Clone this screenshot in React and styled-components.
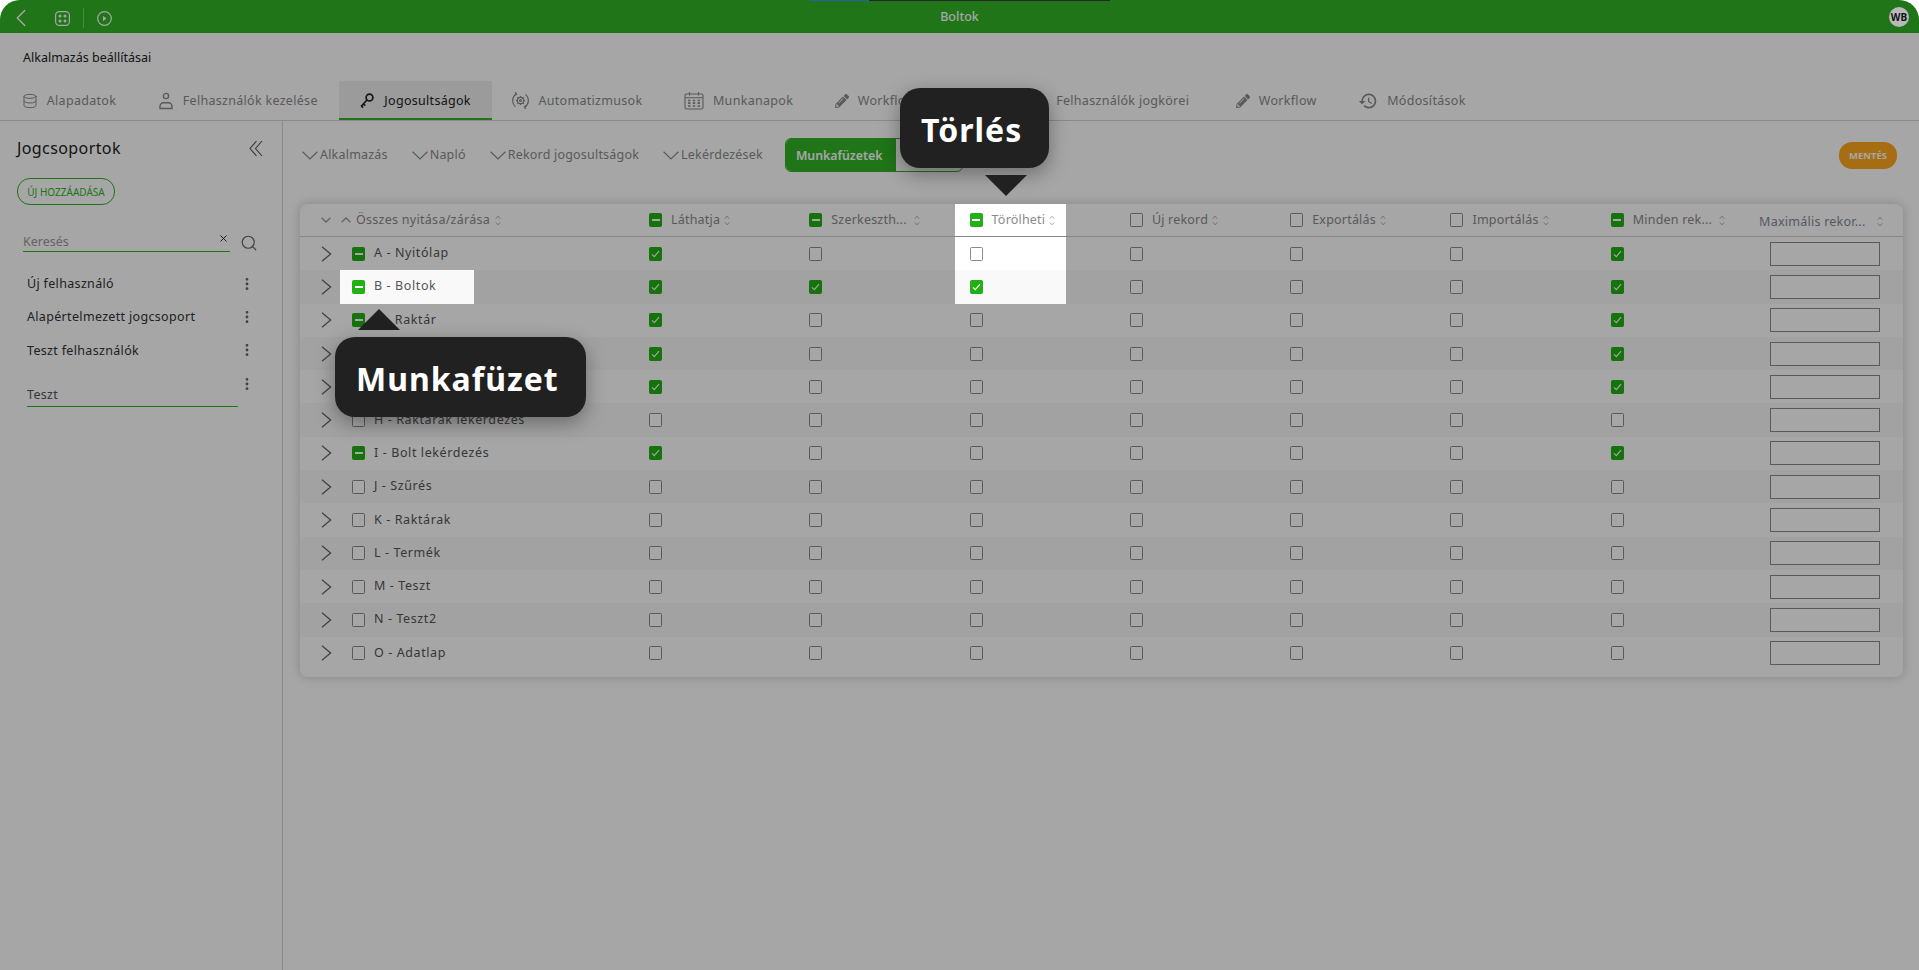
import React from 'react';
import styled, { createGlobalStyle } from 'styled-components';
import { Database, Search, X, ChevronLeft, MoreVertical } from 'lucide-react';
import { MdHistory } from 'react-icons/md';
import { FaPencilAlt } from 'react-icons/fa';

const FONT = '"Noto Sans", "Open Sans", sans-serif';

const GlobalStyle = createGlobalStyle`
    html, body {
        margin: 0;
        height: 100%;
        background: #fff;
        overflow: hidden;
    }
    body {
        font-family: ${FONT};
        font-size: 12.5px;
        color: #444;
    }
`;

const UserIcon = () => (
    <svg width="16" height="18" viewBox="0 0 16 18" fill="none" stroke="currentColor" strokeWidth="1.4">
        <circle cx="8" cy="4" r="2.6" />
        <path d="M2 16.5v-2.2c0-2 1.6-3.6 3.6-3.6h4.8c2 0 3.6 1.6 3.6 3.6v2.2z" />
    </svg>
);

const KeyIcon = () => (
    <svg width="16" height="17" viewBox="0 0 16 17" fill="none" stroke="currentColor" strokeWidth="1.7">
        <circle cx="10.5" cy="5.5" r="3.4" />
        <path d="M8 8 2 14.5M4.6 12l1.6 1.6M2.6 14.2l1.4 1.4" />
    </svg>
);

const AutoIcon = () => (
    <svg width="17" height="19" viewBox="0 0 17 19" fill="none" stroke="currentColor" strokeWidth="1.2">
        <path d="M4.2 2.9A8 8 0 0 0 3.4 15.6" />
        <path d="M12.8 16.1A8 8 0 0 0 13.6 3.4" />
        <path d="M3.2 1l1.4 2.2-2.2 1M13.8 18l-1.4-2.2 2.2-1" />
        <circle cx="8.5" cy="9.5" r="3.2" />
        <circle cx="8.5" cy="9.5" r="1" />
        <path d="M8.5 5v1.4M8.5 12.6V14M4 9.5h1.4M11.6 9.5H13M5.3 6.3l1 1M10.7 11.7l1 1M11.7 6.3l-1 1M6.3 11.7l-1 1" strokeWidth="1.4" />
    </svg>
);

const CalendarIcon = () => (
    <svg width="20" height="19" viewBox="0 0 20 19" fill="none" stroke="currentColor" strokeWidth="1.1">
        <rect x="1" y="3" width="18" height="15" rx="1.5" />
        <path d="M1 6.8h18M5.5 1v3.6M14.5 1v3.6" />
        <path d="M4 9.5h2.4M8.8 9.5h2.4M13.6 9.5H16M4 12.2h2.4M8.8 12.2h2.4M13.6 12.2H16M4 15h2.4M8.8 15h2.4M13.6 15H16" strokeWidth="1.7" />
    </svg>
);

const AppsIcon = () => (
    <svg width="15" height="15" viewBox="0 0 15 15" fill="none" stroke="currentColor" strokeWidth="1.2">
        <rect x="0.6" y="0.6" width="13.8" height="13.8" rx="3.6" />
        <g fill="currentColor" stroke="none">
            <circle cx="5" cy="5" r="1.5" />
            <circle cx="10" cy="5" r="1.5" />
            <circle cx="5" cy="10" r="1.5" />
            <circle cx="10" cy="10" r="1.5" />
        </g>
    </svg>
);

const PlayIcon = () => (
    <svg width="15" height="15" viewBox="0 0 15 15" fill="none" stroke="currentColor" strokeWidth="1.2">
        <circle cx="7.5" cy="7.5" r="6.8" />
        <path d="M6 4.8l3.4 2.7L6 10.2z" fill="currentColor" stroke="none" />
    </svg>
);

const CollapseIcon = () => (
    <svg width="14" height="17" viewBox="0 0 14 17" fill="none" stroke="#555" strokeWidth="1.1">
        <path d="M7.5 1 1 8.5 7.5 16M13 1 6.5 8.5 13 16" />
    </svg>
);

const ExpandIcon = () => (
    <svg width="11" height="16" viewBox="0 0 11 16" fill="none" stroke="#666" strokeWidth="1.3">
        <path d="M1 .8 9.6 8 1 15.2" />
    </svg>
);

const CaretDown = () => (
    <svg width="10" height="6" viewBox="0 0 10 6" fill="none" stroke="#999" strokeWidth="1.3">
        <path d="M.6.8 5 5 9.4.8" />
    </svg>
);

const CaretUp = () => (
    <svg width="10" height="6" viewBox="0 0 10 6" fill="none" stroke="#999" strokeWidth="1.3">
        <path d="M.6 5.2 5 1l4.4 4.2" />
    </svg>
);

const FilterCaret = () => (
    <svg width="16" height="9" viewBox="0 0 16 9" fill="none" stroke="currentColor" strokeWidth="1.2">
        <path d="M.6.8 8 8 15.4.8" />
    </svg>
);

const SortIcon = () => (
    <SortSvg width="6" height="11" viewBox="0 0 6 11" fill="none" stroke="currentColor" strokeWidth="1">
        <path d="M.8 3.6 3 1.2l2.2 2.4M.8 7.4 3 9.8l2.2-2.4" />
    </SortSvg>
);

const Checkbox = ({ state }) => (
    <Box $on={!!state}>
        {state === 'minus' && <Minus />}
        {state === 'check' && (
            <svg width="9" height="8" viewBox="0 0 9 8" fill="none" stroke="#fff" strokeWidth="1.1">
                <path d="M1 4.4 3.3 6.6 8 1.2" />
            </svg>
        )}
    </Box>
);

const tabs = [
    { label: 'Alapadatok', icon: <Database size={16} strokeWidth={1.5} /> },
    { label: 'Felhasználók kezelése', icon: <UserIcon /> },
    { label: 'Jogosultságok', icon: <KeyIcon />, active: true },
    { label: 'Automatizmusok', icon: <AutoIcon /> },
    { label: 'Munkanapok', icon: <CalendarIcon /> },
    { label: 'Workflow', icon: <FaPencilAlt size={14} /> },
    { label: 'Oldal' },
    { label: 'Felhasználók jogkörei', icon: <UserIcon />, tail: 5 },
    { label: 'Workflow', icon: <FaPencilAlt size={14} /> },
    { label: 'Módosítások', icon: <MdHistory size={20} /> },
];

const groups = ['Új felhasználó', 'Alapértelmezett jogcsoport', 'Teszt felhasználók'];

const filters = ['Alkalmazás', 'Napló', 'Rekord jogosultságok', 'Lekérdezések'];

const columns = [
    { label: 'Láthatja', state: 'minus' },
    { label: 'Szerkeszth...', state: 'minus', wide: true },
    { label: 'Törölheti', state: 'minus', spot: true },
    { label: 'Új rekord' },
    { label: 'Exportálás' },
    { label: 'Importálás' },
    { label: 'Minden rek...', state: 'minus', wide: true },
];

const rows = [
    { name: 'A - Nyitólap', on: true },
    { name: 'B - Boltok', on: true, edit: true, del: true, spot: true },
    { name: 'C - Raktár', on: true },
    { name: 'D - Vevők', on: true },
    { name: 'E - Számlák', on: true },
    { name: 'H - Raktárak lekérdezés' },
    { name: 'I - Bolt lekérdezés', on: true },
    { name: 'J - Szűrés' },
    { name: 'K - Raktárak' },
    { name: 'L - Termék' },
    { name: 'M - Teszt' },
    { name: 'N - Teszt2' },
    { name: 'O - Adatlap' },
];

function rowStates(row) {
    return [
        row.on ? 'check' : null,
        row.edit ? 'check' : null,
        row.del ? 'check' : null,
        null,
        null,
        null,
        row.on ? 'check' : null,
    ];
}

function App() {
    return (
        <Screen>
            <GlobalStyle />
            <TopBar>
                <BarLeft>
                    <BackIcon size={30} strokeWidth={1.1} />
                    <AppsIcon />
                    <BarDivider />
                    <PlayIcon />
                </BarLeft>
                <BarTitle>Boltok</BarTitle>
                <Avatar>WB</Avatar>
                <LoadStrip />
            </TopBar>

            <PageTitle>Alkalmazás beállításai</PageTitle>

            <Tabs>
                {tabs.map((tab, i) => (
                    <Tab key={i} $active={tab.active} $tail={tab.tail}>
                        {tab.icon}
                        <span>{tab.label}</span>
                    </Tab>
                ))}
            </Tabs>

            <Body>
                <Sidebar>
                    <SideHeader>
                        <SideTitle>Jogcsoportok</SideTitle>
                        <CollapseIcon />
                    </SideHeader>
                    <AddButton>ÚJ HOZZÁADÁSA</AddButton>
                    <SearchRow>
                        <SearchField>
                            <span>Keresés</span>
                            <X size={11} strokeWidth={2} color="#222" />
                        </SearchField>
                        <SearchIcon size={18} strokeWidth={1.6} color="#666" />
                    </SearchRow>
                    <GroupList>
                        {groups.map((g) => (
                            <GroupItem key={g}>
                                <span>{g}</span>
                                <MoreVertical size={16} strokeWidth={2.2} color="#666" />
                            </GroupItem>
                        ))}
                        <GroupItem>
                            <EditField>Teszt</EditField>
                            <MoreVertical size={16} strokeWidth={2.2} color="#666" />
                        </GroupItem>
                    </GroupList>
                </Sidebar>

                <Main>
                    <Toolbar>
                        {filters.map((f) => (
                            <Filter key={f}>
                                <FilterCaret />
                                {f}
                            </Filter>
                        ))}
                        <Toggle>
                            <ToggleOn>Munkafüzetek</ToggleOn>
                            <ToggleOff>Mezők</ToggleOff>
                        </Toggle>
                        <SaveButton>MENTÉS</SaveButton>
                    </Toolbar>

                    <Card>
                        <HeadRow>
                            <HeadFirst>
                                <CaretDown />
                                <CaretUp />
                                <AllLabel>Összes nyitása/zárása</AllLabel>
                                <SortIcon />
                            </HeadFirst>
                            {columns.map((c) => (
                                <Cell key={c.label}>
                                    <CellInner $spot={c.spot}>
                                        <Checkbox state={c.state} />
                                        <HeadLabel $wide={c.wide}>{c.label}</HeadLabel>
                                        <SortIcon />
                                    </CellInner>
                                </Cell>
                            ))}
                            <MaxHead>
                                <MaxLabel>Maximális rekor...</MaxLabel>
                                <SortIcon />
                            </MaxHead>
                        </HeadRow>
                        {rows.map((row, i) => (
                            <Row key={row.name} $odd={i % 2 === 1}>
                                <NameCell>
                                    <ExpandIcon />
                                    <NameInner $spot={row.spot} $odd={i % 2 === 1}>
                                        <Checkbox state={row.on ? 'minus' : null} />
                                        <NameText>{row.name}</NameText>
                                    </NameInner>
                                </NameCell>
                                {rowStates(row).map((state, c) => (
                                    <Cell key={c}>
                                        <CellInner $spot={columns[c].spot && i < 2} $odd={i % 2 === 1}>
                                            <Checkbox state={state} />
                                        </CellInner>
                                    </Cell>
                                ))}
                                <MaxCell>
                                    <MaxInput />
                                </MaxCell>
                            </Row>
                        ))}
                    </Card>
                </Main>
            </Body>

            <Dimmer />

            <TipDown>
                <TipBubble>Törlés</TipBubble>
                <ArrowDown />
            </TipDown>
            <TipUp>
                <ArrowUp />
                <TipBubble>Munkafüzet</TipBubble>
            </TipUp>
        </Screen>
    );
}

const Screen = styled.div`
    position: relative;
    height: 100vh;
    display: flex;
    flex-direction: column;
    overflow: hidden;
    border-radius: 20px 20px 0 0;
    background: #fff;
`;

const Dimmer = styled.div`
    position: absolute;
    inset: 0;
    z-index: 10;
    background: rgba(0, 0, 0, 0.35);
`;

const TopBar = styled.header`
    position: relative;
    flex: none;
    height: 33px;
    display: grid;
    grid-template-columns: 1fr auto 1fr;
    align-items: center;
    padding: 0 10px;
    background: #30b426;
    color: #fff;
`;

const BarLeft = styled.div`
    display: flex;
    align-items: center;
    gap: 13px;
    padding: 3px 0 0 7px;
`;

const BackIcon = styled(ChevronLeft)`
    margin: -4px 6px -4px -11px;
`;

const BarDivider = styled.div`
    width: 1px;
    height: 20px;
    background: rgba(255, 255, 255, 0.35);
`;

const BarTitle = styled.div`
    font-size: 12.5px;
    font-weight: 500;
`;

const Avatar = styled.div`
    justify-self: end;
    position: relative;
    z-index: 20;
    width: 20px;
    height: 20px;
    border-radius: 50%;
    background: #b9b9b9;
    color: #111;
    font-size: 10px;
    font-weight: 700;
    display: flex;
    align-items: center;
    justify-content: center;
`;

const LoadStrip = styled.div`
    position: absolute;
    top: 0;
    left: 810px;
    width: 300px;
    height: 1px;
    z-index: 20;
    background: linear-gradient(to right, #1d63b0 59px, #262626 59px);
`;

const PageTitle = styled.div`
    flex: none;
    height: 48px;
    padding-left: 23px;
    display: flex;
    align-items: center;
    font-size: 12.5px;
    color: #222;
`;

const Tabs = styled.nav`
    flex: none;
    height: 39px;
    display: flex;
    padding-left: 1px;
    border-bottom: 1px solid #d4d4d4;
`;

const Tab = styled.div`
    display: flex;
    align-items: center;
    gap: 9px;
    padding: 0 ${(p) => 20.8 + (p.$tail || 0)}px 0 20.8px;
    font-size: 12.5px;
    letter-spacing: 0.3px;
    white-space: nowrap;
    color: ${(p) => (p.$active ? '#222' : '#8a8a8a')};
    background: ${(p) => (p.$active ? '#eeeeee' : 'transparent')};
    box-shadow: ${(p) => (p.$active ? 'inset 0 -2px 0 #30b426' : 'none')};
`;

const Body = styled.div`
    flex: 1;
    display: flex;
    min-height: 0;
`;

const Sidebar = styled.aside`
    flex: none;
    width: 283px;
    box-sizing: border-box;
    padding: 17px 19px 0 17px;
    border-right: 1px solid #d4d4d4;
`;

const SideHeader = styled.div`
    display: flex;
    align-items: center;
    justify-content: space-between;
    height: 20px;
`;

const SideTitle = styled.div`
    font-size: 16px;
    letter-spacing: 0.4px;
    color: #222;
`;

const AddButton = styled.button`
    display: block;
    margin-top: 20px;
    width: 98px;
    height: 27px;
    padding: 0;
    border: 1px solid #30b426;
    border-radius: 13px;
    background: #fff;
    color: #30b426;
    font-family: ${FONT};
    font-size: 10px;
`;

const SearchRow = styled.div`
    display: flex;
    align-items: center;
    gap: 10px;
    margin: 20px 0 0 6px;
`;

const SearchField = styled.div`
    flex: none;
    width: 207px;
    height: 26px;
    display: flex;
    align-items: flex-start;
    justify-content: space-between;
    padding-top: 7px;
    box-sizing: border-box;
    border-bottom: 1px solid #30b426;
    color: #999;
    svg {
        margin: 0 1px 0 0;
    }
`;

const SearchIcon = styled(Search)`
    margin-top: 9px;
`;

const GroupList = styled.div`
    margin: 15px 0 0 10px;
`;

const GroupItem = styled.div`
    height: 33.3px;
    display: flex;
    align-items: center;
    justify-content: space-between;
    color: #333;
    letter-spacing: 0.33px;
    padding-right: 8px;
`;

const EditField = styled.div`
    flex: none;
    width: 211px;
    height: 47px;
    box-sizing: border-box;
    margin-right: -2px;
    padding-bottom: 3px;
    display: flex;
    align-items: flex-end;
    color: #555;
    border-bottom: 1px solid #30b426;
`;

const Main = styled.main`
    flex: 1;
    min-width: 0;
    padding: 17px 16px 0 17px;
`;

const Toolbar = styled.div`
    display: flex;
    align-items: center;
    height: 34px;
    margin-bottom: 32px;
    gap: 24px;
    padding-left: 2px;
`;

const Filter = styled.div`
    display: flex;
    align-items: center;
    gap: 2px;
    color: #8a8a8a;
    letter-spacing: 0.2px;
    white-space: nowrap;
    margin-bottom: 1px;
    svg {
        margin-top: 2px;
    }
`;

const Toggle = styled.div`
    display: flex;
    height: 34px;
    margin-left: -2px;
    border: 1px solid #30b426;
    border-radius: 6px;
    overflow: hidden;
    box-sizing: border-box;
`;

const ToggleOn = styled.div`
    width: 110px;
    box-sizing: border-box;
    padding-left: 10px;
    background: #30b426;
    color: #fff;
    font-weight: 600;
    font-size: 12.3px;
    display: flex;
    align-items: center;
`;

const ToggleOff = styled.div`
    width: 66px;
    display: flex;
    align-items: center;
    justify-content: center;
`;

const SaveButton = styled.button`
    margin-left: auto;
    margin-right: 6px;
    width: 58px;
    height: 27px;
    padding: 0;
    border: none;
    border-radius: 13px;
    background: #ffa81c;
    color: #fff;
    font-family: ${FONT};
    font-size: 9.5px;
    font-weight: 700;
`;

const Card = styled.section`
    background: #fff;
    border-radius: 8px;
    padding-bottom: 7px;
    box-shadow: 0 0 12px rgba(0, 0, 0, 0.2);
`;

const rowGrid = `
    display: grid;
    grid-template-columns: 334px repeat(7, 160.3px) 1fr;
`;

const HeadRow = styled.div`
    ${rowGrid}
    height: 32px;
    border-bottom: 1px solid #d0d0d0;
`;

const Row = styled.div`
    ${rowGrid}
    height: 33.3px;
    background: ${(p) => (p.$odd ? '#f9f9f9' : '#fff')};
`;

const Cell = styled.div`
    display: flex;
    align-items: stretch;
    min-width: 0;
`;

const HeadFirst = styled.div`
    display: flex;
    align-items: center;
    padding-left: 21px;
    gap: 10px;
`;

const AllLabel = styled.span`
    color: #8a8a8a;
    white-space: nowrap;
    letter-spacing: 0.28px;
    margin: 0 -5px 2px -5px;
`;

const HeadLabel = styled.span`
    color: #8a8a8a;
    white-space: nowrap;
    letter-spacing: 0.2px;
    margin: 0 ${(p) => (p.$wide ? 3 : 0)}px 2px 5px;
`;

const SortSvg = styled.svg`
    flex: none;
    color: #aaa;
`;

const CellInner = styled.div`
    width: 111px;
    box-sizing: border-box;
    padding-left: 15px;
    display: flex;
    align-items: center;
    gap: 4px;
    ${(p) => p.$spot && `
        position: relative;
        z-index: 20;
        background: ${p.$odd ? '#f9f9f9' : '#fff'};
    `}
`;

const NameCell = styled.div`
    display: flex;
    align-items: center;
    padding-left: 21px;
    gap: 8px;
`;

const NameInner = styled.div`
    width: 134px;
    height: 100%;
    box-sizing: border-box;
    padding-left: 12px;
    display: flex;
    align-items: center;
    gap: 9px;
    white-space: nowrap;
    color: #555;
    ${(p) => p.$spot && `
        position: relative;
        z-index: 20;
        background: ${p.$odd ? '#f9f9f9' : '#fff'};
    `}
`;

const NameText = styled.span`
    letter-spacing: 0.6px;
    margin-bottom: 2px;
`;

const Box = styled.span`
    flex: none;
    width: 13px;
    height: 14px;
    box-sizing: border-box;
    border-radius: 1.5px;
    border: 1px solid ${(p) => (p.$on ? '#22b014' : '#8a8a8a')};
    background: ${(p) => (p.$on ? '#22b014' : '#fff')};
    display: flex;
    align-items: center;
    justify-content: center;
`;

const Minus = styled.span`
    width: 8px;
    height: 2px;
    background: #fff;
`;

const MaxHead = styled.div`
    display: flex;
    align-items: center;
    justify-content: space-between;
    padding: 2px 20px 0 3px;
`;

const MaxLabel = styled.span`
    color: #7f8a99;
    letter-spacing: 0.25px;
    white-space: nowrap;
`;

const MaxCell = styled.div`
    display: flex;
    align-items: center;
    padding-left: 14px;
`;

const MaxInput = styled.div`
    width: 110px;
    height: 24px;
    box-sizing: border-box;
    border: 1px solid #8a8a8a;
    background: #fff;
`;

const TipDown = styled.div`
    position: absolute;
    z-index: 30;
    left: 900px;
    top: 88px;
`;

const TipUp = styled.div`
    position: absolute;
    z-index: 30;
    left: 335px;
    top: 309px;
`;

const TipBubble = styled.div`
    height: 80px;
    box-sizing: border-box;
    padding: 2px 27px 0 21px;
    display: flex;
    align-items: center;
    border-radius: 20px;
    background: #212121;
    color: #fff;
    font-size: 32px;
    font-weight: 700;
    letter-spacing: 1px;
    box-shadow: 0 6px 20px rgba(0, 0, 0, 0.35);
`;

const ArrowDown = styled.div`
    width: 0;
    margin: 7px 0 0 85px;
    border-left: 21px solid transparent;
    border-right: 21px solid transparent;
    border-top: 21px solid #212121;
`;

const ArrowUp = styled.div`
    width: 0;
    margin: 0 0 7px 23px;
    border-left: 21px solid transparent;
    border-right: 21px solid transparent;
    border-bottom: 21px solid #212121;
`;

export default App;
